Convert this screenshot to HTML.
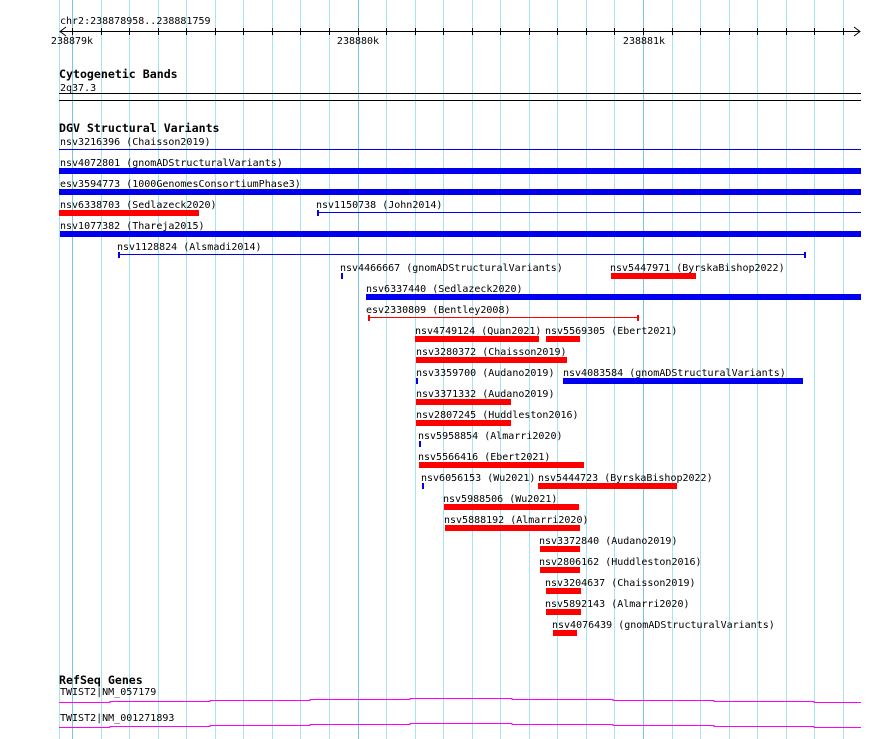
<!DOCTYPE html>
<html><head><meta charset="utf-8"><style>
html,body{margin:0;padding:0;background:#fff;}
svg{display:block;}
text{font-family:"DejaVu Sans Mono","Liberation Mono",monospace;font-size:10px;fill:#000;}
.t{font-weight:bold;font-size:11.6px;}
</style></head><body>
<svg width="890" height="739" xmlns="http://www.w3.org/2000/svg">
<rect width="890" height="739" fill="#fff"/>
<path stroke="#a8e4f0" stroke-width="1" fill="none" d="M59.5 0V739M101.5 0V739M129.5 0V739M158.5 0V739M186.5 0V739M215.5 0V739M243.5 0V739M272.5 0V739M300.5 0V739M329.5 0V739M386.5 0V739M415.5 0V739M443.5 0V739M472.5 0V739M500.5 0V739M529.5 0V739M557.5 0V739M586.5 0V739M614.5 0V739M672.5 0V739M700.5 0V739M729.5 0V739M757.5 0V739M786.5 0V739M814.5 0V739M843.5 0V739"/>
<path stroke="#7cc4e4" stroke-width="1" fill="none" d="M72.5 0V739M358.5 0V739M643.5 0V739"/>
<!-- ruler -->
<text x="60" y="24">chr2:238878958..238881759</text>
<rect x="60" y="31" width="800" height="1" fill="#000"/>
<path d="M66 27 L60 31.5 L66 36" stroke="#000" fill="none"/>
<path d="M854 27 L860 31.5 L854 36" stroke="#000" fill="none"/>
<path stroke="#000" stroke-width="1" fill="none" d="M72.5 28V35M101.5 28V35M129.5 28V35M158.5 28V35M186.5 28V35M215.5 28V35M243.5 28V35M272.5 28V35M300.5 28V35M329.5 28V35M358.5 28V35M386.5 28V35M415.5 28V35M443.5 28V35M472.5 28V35M500.5 28V35M529.5 28V35M557.5 28V35M586.5 28V35M614.5 28V35M643.5 28V35M672.5 28V35M700.5 28V35M729.5 28V35M757.5 28V35M786.5 28V35M814.5 28V35M843.5 28V35"/>
<text x="72" y="44" text-anchor="middle">238879k</text>
<text x="358" y="44" text-anchor="middle">238880k</text>
<text x="644" y="44" text-anchor="middle">238881k</text>
<!-- cytobands -->
<text class="t" x="59" y="78">Cytogenetic Bands</text>
<text x="60" y="91">2q37.3</text>
<rect x="59" y="93" width="802" height="1" fill="#000"/>
<rect x="59" y="100" width="802" height="1" fill="#000"/>
<!-- DGV -->
<text class="t" x="59" y="132">DGV Structural Variants</text>

<text x="60" y="145">nsv3216396 (Chaisson2019)</text>
<rect x="59" y="149" width="802" height="1" fill="#0000ee"/>

<text x="60" y="166">nsv4072801 (gnomADStructuralVariants)</text>
<rect x="59" y="168" width="802" height="6" fill="#0000ee"/>

<text x="60" y="187">esv3594773 (1000GenomesConsortiumPhase3)</text>
<rect x="59" y="189" width="802" height="6" fill="#0000ee"/>

<text x="60" y="208">nsv6338703 (Sedlazeck2020)</text>
<rect x="59" y="210" width="140" height="6" fill="#ff0000"/>
<text x="316" y="208">nsv1150738 (John2014)</text>
<rect x="317" y="212" width="544" height="1" fill="#0000ee"/>
<rect x="317" y="210" width="2" height="6" fill="#0000ee"/>

<text x="60" y="229">nsv1077382 (Thareja2015)</text>
<rect x="60" y="231" width="801" height="6" fill="#0000ee"/>

<text x="117" y="250">nsv1128824 (Alsmadi2014)</text>
<rect x="118" y="254" width="687" height="1" fill="#0000ee"/>
<rect x="118" y="252" width="2" height="6" fill="#0000ee"/>
<rect x="804" y="252" width="2" height="6" fill="#0000ee"/>

<text x="340" y="271">nsv4466667 (gnomADStructuralVariants)</text>
<rect x="341" y="273" width="2" height="6" fill="#0000ee"/>
<text x="610" y="271">nsv5447971 (ByrskaBishop2022)</text>
<rect x="611" y="273" width="85" height="6" fill="#ff0000"/>

<text x="366" y="292">nsv6337440 (Sedlazeck2020)</text>
<rect x="366" y="294" width="495" height="6" fill="#0000ee"/>

<text x="366" y="313">esv2330809 (Bentley2008)</text>
<rect x="368" y="317" width="270" height="1" fill="#ff0000"/>
<rect x="368" y="315" width="2" height="6" fill="#ff0000"/>
<rect x="637" y="315" width="2" height="6" fill="#ff0000"/>

<text x="415" y="334">nsv4749124 (Quan2021)</text>
<rect x="415" y="336" width="124" height="6" fill="#ff0000"/>
<text x="545" y="334">nsv5569305 (Ebert2021)</text>
<rect x="546" y="336" width="34" height="6" fill="#ff0000"/>

<text x="416" y="355">nsv3280372 (Chaisson2019)</text>
<rect x="416" y="357" width="151" height="6" fill="#ff0000"/>

<text x="416" y="376">nsv3359700 (Audano2019)</text>
<rect x="416" y="378" width="2" height="6" fill="#0000ee"/>
<text x="563" y="376">nsv4083584 (gnomADStructuralVariants)</text>
<rect x="563" y="378" width="240" height="6" fill="#0000ee"/>

<text x="416" y="397">nsv3371332 (Audano2019)</text>
<rect x="416" y="399" width="95" height="6" fill="#ff0000"/>

<text x="416" y="418">nsv2807245 (Huddleston2016)</text>
<rect x="416" y="420" width="95" height="6" fill="#ff0000"/>

<text x="418" y="439">nsv5958854 (Almarri2020)</text>
<rect x="419" y="441" width="2" height="6" fill="#0000ee"/>

<text x="418" y="460">nsv5566416 (Ebert2021)</text>
<rect x="419" y="462" width="165" height="6" fill="#ff0000"/>

<text x="421" y="481">nsv6056153 (Wu2021)</text>
<rect x="422" y="483" width="2" height="6" fill="#0000ee"/>
<text x="538" y="481">nsv5444723 (ByrskaBishop2022)</text>
<rect x="538" y="483" width="139" height="6" fill="#ff0000"/>

<text x="443" y="502">nsv5988506 (Wu2021)</text>
<rect x="444" y="504" width="135" height="6" fill="#ff0000"/>

<text x="444" y="523">nsv5888192 (Almarri2020)</text>
<rect x="445" y="525" width="135" height="6" fill="#ff0000"/>

<text x="539" y="544">nsv3372840 (Audano2019)</text>
<rect x="540" y="546" width="40" height="6" fill="#ff0000"/>

<text x="539" y="565">nsv2806162 (Huddleston2016)</text>
<rect x="540" y="567" width="40" height="6" fill="#ff0000"/>

<text x="545" y="586">nsv3204637 (Chaisson2019)</text>
<rect x="546" y="588" width="35" height="6" fill="#ff0000"/>

<text x="545" y="607">nsv5892143 (Almarri2020)</text>
<rect x="546" y="609" width="35" height="6" fill="#ff0000"/>

<text x="552" y="628">nsv4076439 (gnomADStructuralVariants)</text>
<rect x="553" y="630" width="24" height="6" fill="#ff0000"/>

<!-- RefSeq -->
<text class="t" x="59" y="684">RefSeq Genes</text>
<text x="60" y="695">TWIST2|NM_057179</text>
<text x="60" y="721">TWIST2|NM_001271893</text>
<path d="M59 702.5H110V701.5H210V700.5H310V699.5H410V698.5H512V699.5H613V700.5H714V701.5H814V702.5H861" stroke="#ff00ff" fill="none"/>
<path d="M59 727.5H110V726.5H210V725.5H310V724.5H410V723.5H512V724.5H613V725.5H714V726.5H814V727.5H861" stroke="#ff00ff" fill="none"/>
</svg>
</body></html>
